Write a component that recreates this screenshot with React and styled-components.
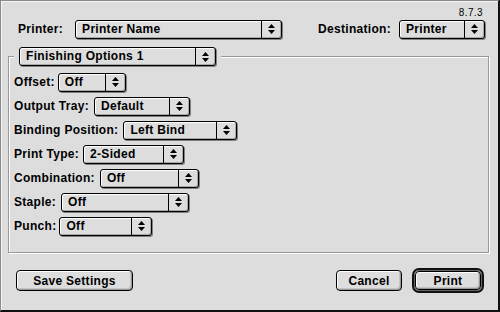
import React from "react";
import styled, { createGlobalStyle } from "styled-components";

const GlobalStyle = createGlobalStyle`
  html, body {
    margin: 0;
    padding: 0;
    background: #dddddd;
  }
  body {
    font-family: "Liberation Sans", Arial, sans-serif;
    font-size: 12px;
    font-weight: bold;
    letter-spacing: 0.3px;
    color: #000;
  }
`;

const Window = styled.div`
  box-sizing: border-box;
  width: 500px;
  height: 312px;
  background: #dddddd;
  border-top: 1px solid #8a8a8a;
  border-left: 1px solid #8a8a8a;
  border-right: 2px solid #111;
  border-bottom: 2px solid #111;
  box-shadow: inset 1px 1px 0 #f4f4f4;
  display: flex;
  flex-direction: column;
`;

const Version = styled.div`
  margin-top: 5px;
  height: 13px;
  line-height: 13px;
  padding-right: 15px;
  text-align: right;
  font-size: 10px;
  font-weight: normal;
  letter-spacing: 0.4px;
`;

const TopRow = styled.div`
  display: flex;
  justify-content: space-between;
  align-items: center;
  padding: 0 13px 0 17px;
`;

const Field = styled.div`
  display: flex;
  align-items: center;
  gap: ${(p) => p.$gap || 4}px;
`;

const Label = styled.span`
  white-space: nowrap;
  line-height: 20px;
`;

const Group = styled.div`
  box-sizing: border-box;
  margin: 17px 9px 0 7px;
  height: 197px;
  border: 1px solid #999;
  box-shadow: inset 1px 1px 0 #fff, 1px 1px 0 #fff;
`;

const Legend = styled.div`
  width: fit-content;
  margin: -10px 0 0 5px;
  padding: 0 5px;
  background: #dddddd;
`;

const Rows = styled.div`
  display: flex;
  flex-direction: column;
  gap: 4px;
  margin-top: 6px;
  padding-left: 5px;
`;

const PopupBox = styled.div`
  box-sizing: border-box;
  width: ${(p) => p.$w}px;
  height: 19px;
  display: flex;
  align-items: stretch;
  border: 1px solid #000;
  border-radius: 3px;
  background: #dddddd;
  box-shadow: inset 1px 1px 0 #fff, inset -1px -1px 0 #aaa, 1px 1px 0 #808080;
`;

const PopupValue = styled.span`
  flex: 1;
  padding-left: 6px;
  line-height: 17px;
  white-space: nowrap;
  overflow: hidden;
`;

const ArrowBox = styled.span`
  width: 19px;
  border-left: 1px solid #000;
  display: flex;
  align-items: center;
  justify-content: center;
`;

const Footer = styled.div`
  display: flex;
  align-items: center;
  justify-content: space-between;
  margin-top: 15px;
  padding: 0 14px 0 15px;
`;

const ButtonGroup = styled.div`
  display: flex;
  align-items: center;
  gap: 10px;
`;

const Button = styled.button`
  box-sizing: border-box;
  width: ${(p) => p.$w}px;
  height: ${(p) => p.$h || 21}px;
  padding: 0;
  border: 1px solid #000;
  border-radius: 4px;
  background: #dddddd;
  box-shadow: inset 1px 1px 0 #fff, inset -1px -1px 0 #999, inset -2px -2px 0 #c4c4c4;
  font: inherit;
  letter-spacing: inherit;
  color: #000;
`;

const DefaultRing = styled.div`
  box-sizing: border-box;
  padding: 1px;
  border: 2px solid #111;
  border-radius: 7px;
  box-shadow: inset 0 0 0 1px #666;
  display: flex;
`;

const Arrows = () => (
  <svg width="7" height="10" viewBox="0 0 7 10">
    <path d="M3.5 0 L7 4 L0 4 Z" fill="#000" />
    <path d="M0 6 L7 6 L3.5 10 Z" fill="#000" />
  </svg>
);

const Popup = ({ value, w }) => (
  <PopupBox $w={w}>
    <PopupValue>{value}</PopupValue>
    <ArrowBox>
      <Arrows />
    </ArrowBox>
  </PopupBox>
);

const options = [
  { label: "Offset:", value: "Off", w: 68, gap: 3 },
  { label: "Output Tray:", value: "Default", w: 96, gap: 5 },
  { label: "Binding Position:", value: "Left Bind", w: 114, gap: 5 },
  { label: "Print Type:", value: "2-Sided", w: 101, gap: 4 },
  { label: "Combination:", value: "Off", w: 99, gap: 5 },
  { label: "Staple:", value: "Off", w: 128, gap: 5 },
  { label: "Punch:", value: "Off", w: 93, gap: 3 },
];

export default function App() {
  return (
    <>
      <GlobalStyle />
      <Window>
        <Version>8.7.3</Version>
        <TopRow>
          <Field $gap={12}>
            <Label>Printer:</Label>
            <Popup value="Printer Name" w={207} />
          </Field>
          <Field $gap={8}>
            <Label>Destination:</Label>
            <Popup value="Printer" w={86} />
          </Field>
        </TopRow>
        <Group>
          <Legend>
            <Popup value="Finishing Options 1" w={197} />
          </Legend>
          <Rows>
            {options.map((o) => (
              <Field key={o.label} $gap={o.gap}>
                <Label>{o.label}</Label>
                <Popup value={o.value} w={o.w} />
              </Field>
            ))}
          </Rows>
        </Group>
        <Footer>
          <Button $w={117}>Save Settings</Button>
          <ButtonGroup>
            <Button $w={66}>Cancel</Button>
            <DefaultRing>
              <Button $w={66} $h={19}>Print</Button>
            </DefaultRing>
          </ButtonGroup>
        </Footer>
      </Window>
    </>
  );
}
